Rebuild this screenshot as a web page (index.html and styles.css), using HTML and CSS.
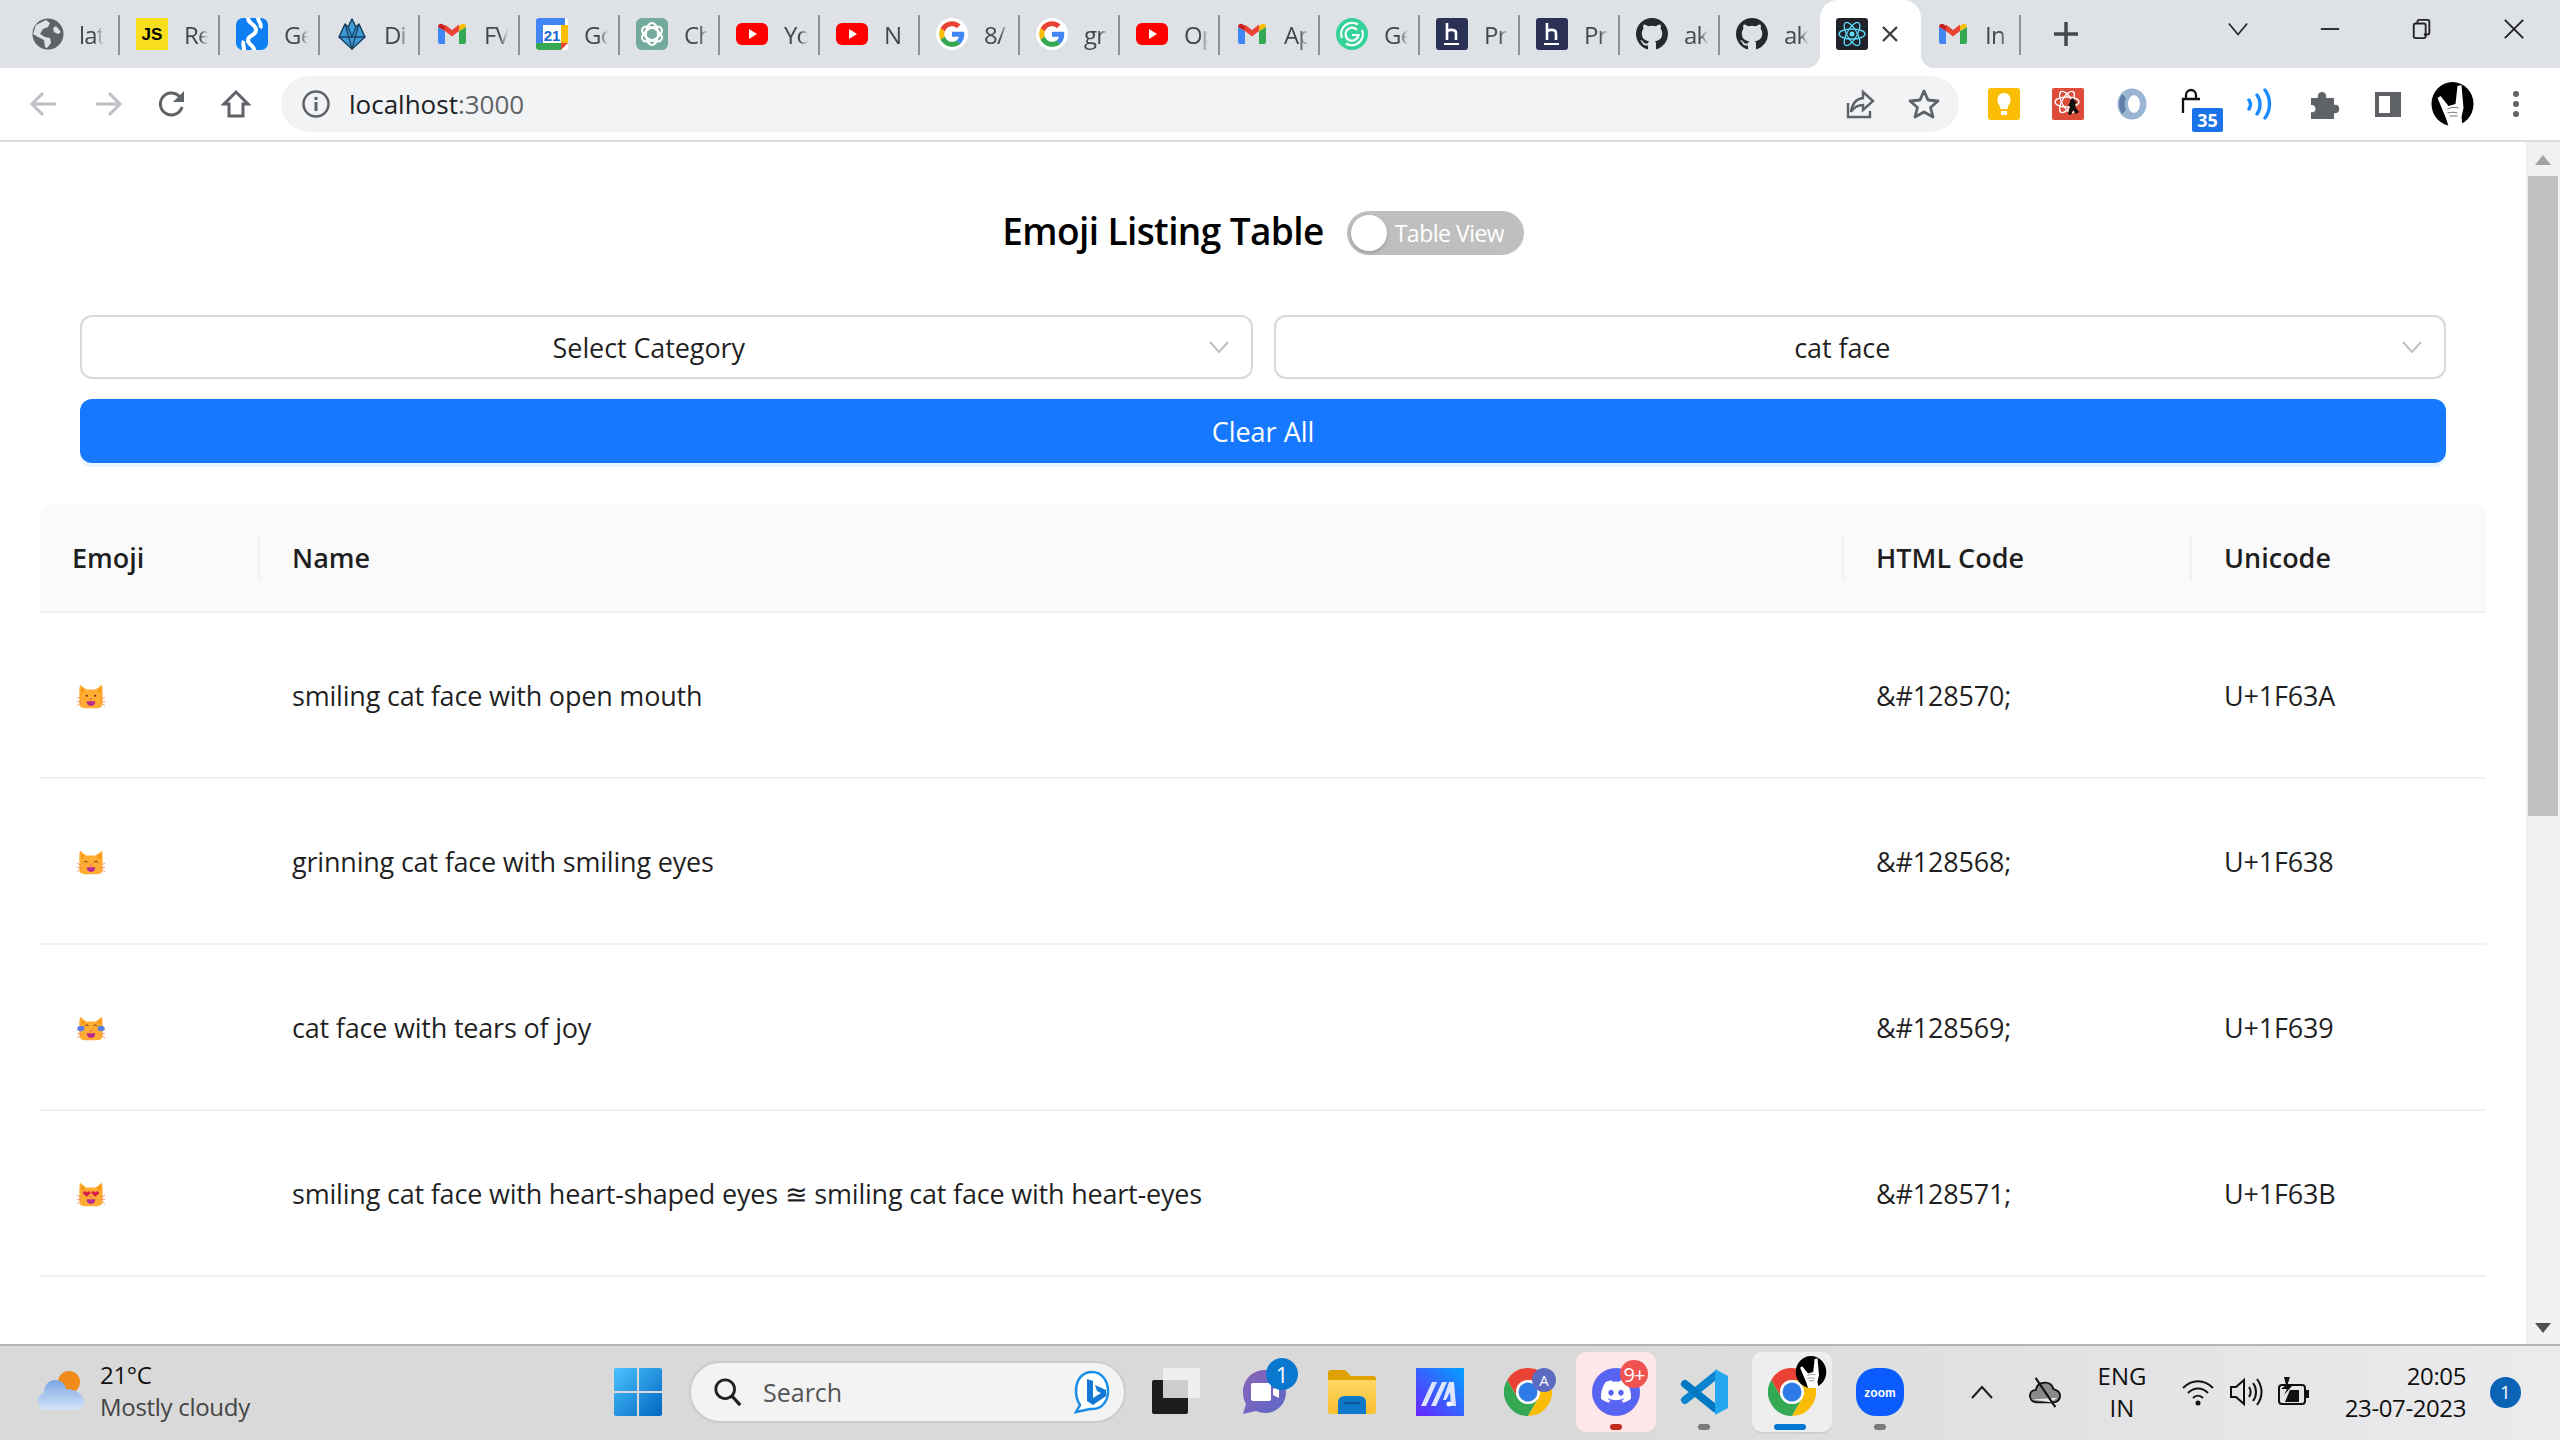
FILE: index.html
```html
<!DOCTYPE html>
<html lang="en">
<head>
<meta charset="utf-8">
<title>Emoji Listing Table</title>
<link rel="stylesheet" href="styles.css">
</head>
<body>
<svg class="defs" aria-hidden="true">
  <defs>
    <linearGradient id="winGrad" x1="0" y1="0" x2="1" y2="1"><stop offset="0" stop-color="#4cc2ff"/><stop offset="1" stop-color="#0067c0"/></linearGradient>
    <linearGradient id="mosaicGrad" x1="0" y1="1" x2="1" y2="0"><stop offset="0" stop-color="#6a24ff"/><stop offset="1" stop-color="#00a2ff"/></linearGradient>
    <linearGradient id="teamsGrad" x1="0" y1="0" x2="1" y2="1"><stop offset="0" stop-color="#8c64b8"/><stop offset="1" stop-color="#5a68c8"/></linearGradient>
    <linearGradient id="cloudGrad" x1="0" y1="0" x2="0" y2="1"><stop offset="0" stop-color="#7aa6e6"/><stop offset="1" stop-color="#d6e4f8"/></linearGradient>
    <linearGradient id="folderGrad" x1="0" y1="0" x2="0" y2="1"><stop offset="0" stop-color="#ffd766"/><stop offset="1" stop-color="#fbbf2d"/></linearGradient>
  </defs>
  <symbol id="gmail" viewBox="0 0 32 32">
    <path fill="#4285f4" d="M2 9v15a2 2 0 0 0 2 2h5V13z"/>
    <path fill="#34a853" d="M23 13v13h5a2 2 0 0 0 2-2V9z"/>
    <path fill="#ea4335" d="M9 13l7 5.5 7-5.5V6.5L16 12 9 6.5z"/>
    <path fill="#c5221f" d="M2 9c0-3 3-4 5-2.500l2 1.500v5z"/>
    <path fill="#fbbc04" d="M30 9c0-3-3-4-5-2.500L23 8v5z"/>
  </symbol>
  <symbol id="google" viewBox="-6 -6 60 60">
    <ellipse cx="24" cy="24" rx="30" ry="30" fill="#fff"/>
    <path fill="#EA4335" d="M24 9.5c3.54 0 6.71 1.22 9.21 3.6l6.85-6.85C35.9 2.38 30.47 0 24 0 14.62 0 6.51 5.38 2.56 13.22l7.98 6.19C12.43 13.72 17.74 9.5 24 9.5z"/>
    <path fill="#4285F4" d="M46.98 24.55c0-1.57-.15-3.09-.38-4.55H24v9.02h12.94c-.58 2.96-2.26 5.48-4.78 7.18l7.73 6c4.51-4.18 7.09-10.36 7.09-17.65z"/>
    <path fill="#FBBC05" d="M10.53 28.59c-.48-1.45-.76-2.99-.76-4.59s.27-3.14.76-4.59l-7.98-6.19C.92 16.46 0 20.12 0 24c0 3.88.92 7.54 2.56 10.78l7.97-6.19z"/>
    <path fill="#34A853" d="M24 48c6.48 0 11.93-2.13 16.04-5.81l-7.73-6c-2.15 1.45-4.92 2.3-8.31 2.3-6.26 0-11.57-4.22-13.47-9.91l-7.98 6.19C6.51 42.62 14.62 48 24 48z"/>
  </symbol>
  <symbol id="youtube" viewBox="0 0 32 32">
    <rect x="0" y="5" width="32" height="22" rx="6" fill="#f00"/>
    <path fill="#fff" d="M13 11l8 5-8 5z"/>
  </symbol>
  <symbol id="github" viewBox="0 0 16 16">
    <path fill="#24292f" d="M8 0C3.58 0 0 3.58 0 8c0 3.54 2.29 6.53 5.47 7.59.4.07.55-.17.55-.38 0-.19-.01-.82-.01-1.49-2.01.37-2.53-.49-2.69-.94-.09-.23-.48-.94-.82-1.13-.28-.15-.68-.52-.01-.53.63-.01 1.08.58 1.23.82.72 1.21 1.87.87 2.33.66.07-.52.28-.87.51-1.07-1.78-.2-3.64-.89-3.64-3.95 0-.87.31-1.59.82-2.15-.08-.2-.36-1.02.08-2.12 0 0 .67-.21 2.2.82.64-.18 1.32-.27 2-.27.68 0 1.36.09 2 .27 1.53-1.04 2.2-.82 2.2-.82.44 1.1.16 1.92.08 2.12.51.56.82 1.27.82 2.15 0 3.07-1.87 3.75-3.65 3.95.29.25.54.73.54 1.48 0 1.07-.01 1.93-.01 2.2 0 .21.15.46.55.38A8.013 8.013 0 0016 8c0-4.42-3.58-8-8-8z"/>
  </symbol>
  <symbol id="hash" viewBox="0 0 32 32">
    <rect width="32" height="32" rx="3" fill="#2a3154"/>
    <path fill="none" stroke="#fff" stroke-width="2.6" d="M11 5v17M11 14c1-3 9-3 9 1v7"/>
    <path stroke="#fff" stroke-width="2" d="M8 26h15"/>
  </symbol>
  <symbol id="chrome" viewBox="0 0 48 48">
    <path fill="#ea4335" d="M24 0A24 24 0 0 0 3.2 12L13.6 30A12 12 0 0 1 24 12H44.8A24 24 0 0 0 24 0z"/>
    <path fill="#34a853" d="M3.2 12A24 24 0 0 0 24 48L34.4 30A12 12 0 0 1 13.6 30z"/>
    <path fill="#fbbc04" d="M44.8 12H24A12 12 0 0 1 34.4 30L24 48A24 24 0 0 0 44.8 12z"/>
    <circle cx="24" cy="24" r="12" fill="#fff"/>
    <circle cx="24" cy="24" r="9.5" fill="#2f7be8"/>
  </symbol>
  <symbol id="rock" viewBox="0 0 42 44">
    <ellipse cx="21" cy="22" rx="21" ry="22" fill="#000"/>
    <path fill="#fff" d="M6 16l3-2 8 10 7-2 2-18 4-1 2 23-2 9 1 9H17l-3-9z"/>
    <path fill="none" stroke="#777" stroke-width="1" d="M16 27c3-2 8-2 11-1M16 31c3-1 7-1 10 0M18 34h8"/>
  </symbol>
  <symbol id="cat" viewBox="0 0 36 32">
    <path fill="#ffac33" d="M4 1l8 6h12l8-6c1 3 1 8 1 12v12c0 4-3 6-7 6H10c-4 0-7-2-7-6V13c0-4 0-9 1-12z"/>
    <path fill="#f4900c" d="M5.500 4l4 4-3.500 4zM30.500 4l-4 4 3.500 4z"/>
    <path fill="none" stroke="#f98a50" stroke-width="1" d="M0 17l6 2.500M0 28l6-4M0 22.500h6M36 17l-6 2.500M36 28l-6-4M36 22.500h-6"/>
    <path fill="#e6449a" d="M16.500 18.500h3L18 20.500z"/>
    <path fill="#bb2a90" d="M12.500 22h11c0 4-2 6-5.500 6s-5.500-2-5.500-6z"/>
  </symbol>
</svg>

<header class="tabstrip">
  <div class="tab tab-first"><svg class="fav" viewBox="0 0 32 32"><circle cx="16" cy="16" r="15.500" fill="#5f6368"/><path fill="#dee1e6" d="M14 2l4 3-2 4-5 2-3 5 5 3 5 1 1 5-4 5-2-1-1-7-6-3-5-3 3-9zM24 8l5 6-3 2-4-2-1-4z"/></svg><span class="tab-label">lat</span></div>
  <div class="tab"><svg class="fav" viewBox="0 0 32 32"><rect width="32" height="32" fill="#f7df1e"/><text x="16" y="22" text-anchor="middle" class="svgt-js">JS</text></svg><span class="tab-label">Re</span></div>
  <div class="tab"><svg class="fav" viewBox="0 0 32 32"><rect width="32" height="32" rx="7" fill="#0d7ff2"/><path fill="none" stroke="#fff" stroke-width="4" d="M12 0c0 6 8 6 8 12s-8 5-8 10 6 5 6 10M22 0c0 4 5 6 2 10M8 32c0-5-2-6 0-9"/></svg><span class="tab-label">Ge</span></div>
  <div class="tab"><svg class="fav" viewBox="0 0 32 32"><path fill="#3f9bd8" stroke="#17415f" stroke-width="1.500" stroke-linejoin="round" d="M16 1l4 8 3-3 6 13-13 12L3 19 9 6l3 3z"/><path fill="none" stroke="#17415f" stroke-width="1.300" d="M3 19h26M9 6l7 25 7-25M12 9l4 10 4-10"/></svg><span class="tab-label">Di</span></div>
  <div class="tab"><svg class="fav"><use href="#gmail"/></svg><span class="tab-label">FV</span></div>
  <div class="tab"><svg class="fav" viewBox="0 0 32 32"><rect width="32" height="32" rx="3" fill="#fff"/><path fill="#4285f4" d="M3 0h26v7H0V3a3 3 0 0 1 3-3z"/><path fill="#4285f4" d="M0 7h7v18H0z"/><path fill="#fbbc04" d="M25 7h7v18h-7z"/><path fill="#34a853" d="M0 25h25v7H3a3 3 0 0 1-3-3z"/><path fill="#ea4335" d="M25 25h7l-7 7z"/><text x="16" y="23" text-anchor="middle" class="svgt-cal">21</text></svg><span class="tab-label">Go</span></div>
  <div class="tab"><svg class="fav" viewBox="0 0 32 32"><rect width="32" height="32" rx="6" fill="#74aa9c"/><g fill="none" stroke="#fff" stroke-width="2"><ellipse cx="16" cy="16" rx="6" ry="11"/><ellipse cx="16" cy="16" rx="6" ry="11" transform="rotate(60 16 16)"/><ellipse cx="16" cy="16" rx="6" ry="11" transform="rotate(120 16 16)"/></g></svg><span class="tab-label">Ch</span></div>
  <div class="tab"><svg class="fav"><use href="#youtube"/></svg><span class="tab-label">Yo</span></div>
  <div class="tab"><svg class="fav"><use href="#youtube"/></svg><span class="tab-label">N</span></div>
  <div class="tab"><svg class="fav"><use href="#google"/></svg><span class="tab-label">8/</span></div>
  <div class="tab"><svg class="fav"><use href="#google"/></svg><span class="tab-label">gr</span></div>
  <div class="tab"><svg class="fav"><use href="#youtube"/></svg><span class="tab-label">Op</span></div>
  <div class="tab"><svg class="fav"><use href="#gmail"/></svg><span class="tab-label">Ap</span></div>
  <div class="tab"><svg class="fav" viewBox="0 0 32 32"><circle cx="16" cy="16" r="16" fill="#35d39a"/><g fill="none" stroke="#fff" stroke-width="2.200"><path d="M6 20A11 11 0 0 1 22 6.500M26 12A11 11 0 0 1 10 25.500"/><path d="M21 12a6.500 6.500 0 1 0 1.500 5H16"/></g></svg><span class="tab-label">Ge</span></div>
  <div class="tab"><svg class="fav"><use href="#hash"/></svg><span class="tab-label">Pr</span></div>
  <div class="tab"><svg class="fav"><use href="#hash"/></svg><span class="tab-label">Pr</span></div>
  <div class="tab"><svg class="fav"><use href="#github"/></svg><span class="tab-label">ak</span></div>
  <div class="tab tab-before"><svg class="fav"><use href="#github"/></svg><span class="tab-label">ak</span></div>
  <div class="tab tab-active">
    <svg class="fav" viewBox="0 0 32 32"><rect width="32" height="32" rx="3" fill="#20232a"/><g fill="none" stroke="#61dafb" stroke-width="1.300"><ellipse cx="16" cy="16" rx="13" ry="5"/><ellipse cx="16" cy="16" rx="13" ry="5" transform="rotate(60 16 16)"/><ellipse cx="16" cy="16" rx="13" ry="5" transform="rotate(120 16 16)"/></g><circle cx="16" cy="16" r="2.500" fill="#61dafb"/></svg>
    <svg class="tab-close" viewBox="0 0 18 18"><path stroke="#3c4043" stroke-width="2.400" d="M2 2l14 14M16 2L2 16"/></svg>
  </div>
  <div class="tab"><svg class="fav"><use href="#gmail"/></svg><span class="tab-label">In</span></div>
  <button class="newtab" type="button"><svg viewBox="0 0 24 24"><path stroke="#45484c" stroke-width="3.500" d="M12 0v24M0 12h24"/></svg></button>
  <div class="winctl">
    <span class="winbtn"><svg viewBox="0 0 24 16"><path fill="none" stroke="#222" stroke-width="1.800" d="M2 2l10 12L22 2"/></svg></span>
    <span class="winbtn"><svg viewBox="0 0 24 16"><path stroke="#222" stroke-width="2" d="M2 8h20"/></svg></span>
    <span class="winbtn"><svg viewBox="0 0 24 24"><path fill="none" stroke="#222" stroke-width="2" d="M3 8a2 2 0 0 1 2-2h9a2 2 0 0 1 2 2v12a2 2 0 0 1-2 2H5a2 2 0 0 1-2-2zM7 6V4a2 2 0 0 1 2-2h9a2 2 0 0 1 2 2v12a2 2 0 0 1-2 2h-4"/></svg></span>
    <span class="winbtn"><svg viewBox="0 0 24 24"><path stroke="#222" stroke-width="2" d="M2 2l20 20M22 2L2 22"/></svg></span>
  </div>
</header>

<nav class="toolbar">
  <span class="tb"><svg class="ic" viewBox="0 0 32 32"><path fill="none" stroke="#bdc1c6" stroke-width="3" d="M28 16H5M15 5L4 16l11 11"/></svg></span>
  <span class="tb"><svg class="ic" viewBox="0 0 32 32"><path fill="none" stroke="#bdc1c6" stroke-width="3" d="M4 16h23M17 5l11 11-11 11"/></svg></span>
  <span class="tb"><svg class="ic" viewBox="0 0 32 32"><path fill="none" stroke="#5f6368" stroke-width="3" d="M26 19a11 11 0 1 1-3-11l4 4"/><path fill="#5f6368" d="M28 3v11H17z"/></svg></span>
  <span class="tb"><svg class="ic" viewBox="0 0 32 32"><path fill="none" stroke="#5f6368" stroke-width="3" d="M16 4L4 16h5v12h14V16h5z"/></svg></span>
  <div class="omnibox">
    <svg class="ic info" viewBox="0 0 32 32"><circle cx="16" cy="16" r="12.500" fill="none" stroke="#5f6368" stroke-width="2.500"/><path stroke="#5f6368" stroke-width="3" d="M16 14v9M16 9v3"/></svg>
    <span class="url">localhost<span class="url-dim">:3000</span></span>
    <span class="tb tb-share"><svg class="ic" viewBox="0 0 32 32"><path fill="none" stroke="#5f6368" stroke-width="2.400" d="M4 15v14h22v-6M19 4l10 9-10 9v-5c-6 0-9 2-12 7 1-8 5-13 12-14z"/></svg></span>
    <span class="tb"><svg class="ic" viewBox="0 0 32 32"><path fill="none" stroke="#5f6368" stroke-width="2.800" stroke-linejoin="round" d="M16 3l4 9 10 1-7.500 6.500L25 29l-9-5-9 5 2.500-9.500L2 13l10-1z"/></svg></span>
  </div>
  <span class="tb"><svg class="ic" viewBox="0 0 32 32"><rect width="32" height="32" rx="3" fill="#fbbc04"/><path fill="#fff" d="M16 5c5 0 7 4 6.500 8-.4 3-2.500 4-3 8h-7c-.5-4-2.600-5-3-8C9 9 11 5 16 5zM13 23h6v4h-6z"/></svg></span>
  <span class="tb"><svg class="ic" viewBox="0 0 32 32"><rect width="32" height="32" rx="2" fill="#dd4b39"/><g fill="none" stroke="#fff" stroke-width="1.300"><ellipse cx="15" cy="14" rx="12" ry="5"/><ellipse cx="15" cy="14" rx="12" ry="5" transform="rotate(60 15 14)"/><ellipse cx="15" cy="14" rx="12" ry="5" transform="rotate(120 15 14)"/></g><path fill="#111" d="M18 12l3-2 2 3 2 1-2 2 1 4 3 4-3 2-3-4-2 5-3-1 2-7-2-2 2-2z"/></svg></span>
  <span class="tb"><svg class="ic" viewBox="0 0 32 32"><ellipse cx="16" cy="16" rx="14.500" ry="15.500" fill="#9ab5d3"/><ellipse cx="18" cy="16" rx="6" ry="9" fill="#fff"/><path fill="#5f7fa6" d="M6 6c-4 6-4 14 0 20l4-4c-2-4-2-8 0-12z"/></svg></span>
  <span class="tb tb-badge"><svg class="ic lock" viewBox="0 0 32 32"><path fill="none" stroke="#111" stroke-width="2.300" d="M7 27V13h17M10 13V9a5 5 0 0 1 10 0v4"/></svg><span class="ext-badge">35</span></span>
  <span class="tb"><svg class="ic" viewBox="0 0 32 32"><path fill="none" stroke="#1a8cff" stroke-width="3.400" stroke-linecap="round" d="M5 12c2 3 2 6 0 9M13 7c4 5 4 14 0 19M21 2c6 8 6 20 0 28"/></svg></span>
  <span class="tb"><svg class="ic" viewBox="0 0 32 32"><path fill="#5f6368" d="M3 10h7c-2-8 10-8 8 0h8v7c7-2 7 10 0 8v6H3v-7c6 2 6-8 0-7z"/></svg></span>
  <span class="tb"><svg class="ic" viewBox="0 0 32 32"><path fill="#5f6368" d="M3 4h26v25H3zM7 8v17h11V8z"/></svg></span>
  <span class="tb"><svg class="avatar"><use href="#rock"/></svg></span>
  <span class="tb"><svg class="ic" viewBox="0 0 32 32"><g fill="#5f6368"><circle cx="16" cy="6" r="3"/><circle cx="16" cy="16" r="3"/><circle cx="16" cy="26" r="3"/></g></svg></span>
</nav>

<div class="viewport">
  <main class="page">
    <div class="heading">
      <h1 class="title">Emoji Listing Table</h1>
      <div class="toggle"><span class="knob"></span><span class="toggle-text">Table View</span></div>
    </div>
    <div class="filters">
      <div class="select"><span class="select-text">Select Category</span><svg class="chev" viewBox="0 0 20 12"><path fill="none" stroke="#bfbfbf" stroke-width="2" d="M1 1l9 10 9-10"/></svg></div>
      <div class="select"><span class="select-text">cat face</span><svg class="chev" viewBox="0 0 20 12"><path fill="none" stroke="#bfbfbf" stroke-width="2" d="M1 1l9 10 9-10"/></svg></div>
    </div>
    <button class="clear" type="button">Clear All</button>
    <table class="emoji-table">
      <colgroup><col class="c-emoji"><col class="c-name"><col class="c-html"><col class="c-uni"></colgroup>
      <thead>
        <tr><th class="sep">Emoji</th><th class="sep">Name</th><th class="sep">HTML Code</th><th>Unicode</th></tr>
      </thead>
      <tbody>
        <tr>
          <td><svg class="cat-ic" viewBox="0 0 36 32"><use href="#cat"/><circle cx="12.500" cy="15" r="1.300" fill="#662113"/><circle cx="23.500" cy="15" r="1.300" fill="#662113"/></svg></td>
          <td>smiling cat face with open mouth</td><td>&amp;#128570;</td><td>U+1F63A</td>
        </tr>
        <tr>
          <td><svg class="cat-ic" viewBox="0 0 36 32"><use href="#cat"/><path fill="none" stroke="#662113" stroke-width="1.200" d="M9 16c1-2 4-2 5 0M22 16c1-2 4-2 5 0"/></svg></td>
          <td>grinning cat face with smiling eyes</td><td>&amp;#128568;</td><td>U+1F638</td>
        </tr>
        <tr>
          <td><svg class="cat-ic" viewBox="0 0 36 32"><use href="#cat"/><path fill="none" stroke="#662113" stroke-width="1.200" d="M10 13c1-2 4-2 5 0M21 13c1-2 4-2 5 0"/><ellipse cx="5" cy="16" rx="4.500" ry="3.500" fill="#5b7fe8"/><ellipse cx="31" cy="16" rx="4.500" ry="3.500" fill="#5b7fe8"/></svg></td>
          <td>cat face with tears of joy</td><td>&amp;#128569;</td><td>U+1F639</td>
        </tr>
        <tr>
          <td><svg class="cat-ic" viewBox="0 0 36 32"><use href="#cat"/><path fill="#d8204f" d="M12.500 19l-4.500-4c-2-3 2.500-4.500 4.500-2 2-2.500 6.500-1 4.500 2zM23.500 19l-4.500-4c-2-3 2.500-4.500 4.500-2 2-2.500 6.500-1 4.500 2z"/></svg></td>
          <td>smiling cat face with heart-shaped eyes ≊ smiling cat face with heart-eyes</td><td>&amp;#128571;</td><td>U+1F63B</td>
        </tr>
      </tbody>
    </table>
  </main>
  <aside class="scrollbar">
    <svg class="sb-arrow" viewBox="0 0 16 10"><path fill="#a3a3a3" d="M8 0l8 10H0z"/></svg>
    <div class="sb-thumb"></div>
    <div class="sb-track"></div>
    <svg class="sb-arrow" viewBox="0 0 16 10"><path fill="#505050" d="M8 10L0 0h16z"/></svg>
  </aside>
</div>

<footer class="taskbar">
  <div class="weather">
    <svg class="weather-ic" viewBox="0 0 46 42"><circle cx="31" cy="12" r="11" fill="#f08a18"/><path fill="url(#cloudGrad)" d="M8 40C2 40 0 35 0 31c0-4 2-7 6-8 0-8 5-13 11-13s10 3 11 9c5 0 9 1 13 4 3 2 5 5 5 8 0 5-3 9-8 9z"/></svg>
    <div class="weather-text"><div class="w-temp">21°C</div><div class="w-desc">Mostly cloudy</div></div>
  </div>
  <div class="slot"><svg class="tk-ic" viewBox="0 0 46 46"><g fill="url(#winGrad)"><path d="M0 2a2 2 0 0 1 2-2h20v22H0zM24 0h20a2 2 0 0 1 2 2v20H24zM0 24h22v22H2a2 2 0 0 1-2-2zM24 24h22v20a2 2 0 0 1-2 2H24z"/></g></svg></div>
  <div class="search">
    <svg class="search-ic" viewBox="0 0 32 32"><circle cx="13" cy="13" r="10" fill="none" stroke="#222" stroke-width="3"/><path stroke="#222" stroke-width="3.500" d="M20 20l9 10"/></svg>
    <span class="search-text">Search</span>
    <svg class="bing" viewBox="0 0 36 44"><path fill="#fff" stroke="#1b8fe6" stroke-width="2.500" d="M18 2C8 2 2 10 2 21c0 6 2 11 4 14l-4 7 14-3h3c9 0 15-8 15-18S28 2 18 2z"/><path fill="#1478d4" d="M13 9l6 2v17l8-5-4-2-2-6 11 5v6l-13 9-6-4z"/></svg>
  </div>
  <div class="slot"><svg class="tk-ic" viewBox="0 0 48 48"><rect x="0" y="12" width="36" height="34" rx="2" fill="#1c1c1c"/><rect x="11" y="0" width="37" height="30" rx="1" fill="#f4f4f4" fill-opacity=".82"/></svg></div>
  <div class="slot"><svg class="tk-ic" viewBox="0 0 48 48"><path fill="url(#teamsGrad)" d="M25 2C12 2 3 12 3 24c0 5 1 9 3 12l-3 10 13-3c3 1 6 2 9 2 12 0 21-9 21-21S37 2 25 2z"/><rect x="11" y="15" width="20" height="18" rx="2" fill="#fff"/><path fill="#fff" d="M33 21l6-3v12l-6-3z"/></svg><span class="tk-badge badge-blue">1</span></div>
  <div class="slot"><svg class="tk-ic" viewBox="0 0 48 44"><path fill="#dfa100" d="M0 3a3 3 0 0 1 3-3h14l6 6h22a3 3 0 0 1 3 3v6H0z"/><path fill="url(#folderGrad)" d="M0 10h48v31a3 3 0 0 1-3 3H3a3 3 0 0 1-3-3z"/><path fill="#0f78c8" d="M10 44V32a6 6 0 0 1 6-6h16a6 6 0 0 1 6 6v12z"/><path stroke="#0a5a9a" stroke-width="2" d="M16 33h16"/></svg></div>
  <div class="slot"><svg class="tk-ic" viewBox="0 0 48 48"><rect width="48" height="48" fill="url(#mosaicGrad)"/><path fill="#dfe4ff" d="M5 38L16 14h5L10 38zM15 38l11-24h5L20 38zM33 14h5l2 24h-5l-1-14-4 8h-3z"/><circle cx="33" cy="36" r="2.500" fill="#fff"/></svg></div>
  <div class="slot"><svg class="tk-ic"><use href="#chrome"/></svg><span class="tk-badge badge-acc">A</span></div>
  <div class="slot slot-alert"><svg class="tk-ic" viewBox="0 0 48 48"><circle cx="24" cy="24" r="24" fill="#5865f2"/><svg x="9" y="12" width="30" height="23" viewBox="0 0 127.140 96.360"><path fill="#fff" d="M107.700 8.070A105.150 105.150 0 0 0 81.470 0a72.060 72.060 0 0 0-3.360 6.830 97.680 97.680 0 0 0-29.110 0A72.370 72.370 0 0 0 45.640 0a105.890 105.890 0 0 0-26.250 8.090C2.790 32.650-1.710 56.600.54 80.210a105.730 105.730 0 0 0 32.170 16.150 77.700 77.700 0 0 0 6.890-11.110 68.420 68.420 0 0 1-10.850-5.180c.91-.66 1.800-1.340 2.660-2a75.570 75.570 0 0 0 64.320 0c.87.710 1.760 1.390 2.660 2a68.680 68.680 0 0 1-10.870 5.190 77 77 0 0 0 6.890 11.100 105.250 105.250 0 0 0 32.190-16.140c2.640-27.380-4.510-51.110-18.900-72.150zM42.450 65.690C36.180 65.690 31 60 31 53s5-12.740 11.430-12.740S54 46 53.890 53s-5.050 12.690-11.440 12.690zm42.240 0C78.410 65.690 73.250 60 73.250 53s5-12.740 11.440-12.740S96.230 46 96.120 53s-5.040 12.690-11.430 12.690z"/></svg></svg><span class="tk-badge badge-red">9+</span><span class="pill pill-red"></span></div>
  <div class="slot"><svg class="tk-ic" viewBox="0 0 48 48"><g fill="none" stroke-width="8" stroke-linecap="round"><path stroke="#0a84d0" d="M36 7L5 32"/><path stroke="#0078c4" d="M5 16l31 25"/></g><path fill="#22a7f0" d="M35 1l13 7v32l-13 7z"/></svg><span class="pill pill-gray"></span></div>
  <div class="slot slot-active"><svg class="tk-ic"><use href="#chrome"/></svg><svg class="tk-avatar"><use href="#rock"/></svg><span class="pill pill-blue"></span></div>
  <div class="slot"><svg class="tk-ic" viewBox="0 0 48 48"><rect width="48" height="48" rx="20" fill="#0b5cff"/><text x="24" y="29" text-anchor="middle" class="svgt-zoom">zoom</text></svg><span class="pill pill-gray"></span></div>
  <div class="tray">
    <span class="tr tr-caret"><svg class="tr-ic" viewBox="0 0 24 24"><path fill="none" stroke="#1a1a1a" stroke-width="2" d="M2 18L12 7l10 11"/></svg></span>
    <span class="tr tr-cloud"><svg class="tr-ic2" viewBox="0 0 34 34"><path fill="#8a8a8a" d="M9 28C3 28 1 24 1 21s2-6 6-6c1-5 5-8 10-8s8 3 9 7c4 1 7 3 7 7s-3 7-7 7z" stroke="#111" stroke-width="2"/><path fill="#e8e8e8" d="M3 25l20 3 7-5z"/><path stroke="#111" stroke-width="2.200" d="M7 2l21 31"/></svg></span>
    <span class="tr tr-lang"><span>ENG</span><span>IN</span></span>
    <span class="tr tr-sys tr-wifi"><svg class="tr-ic2" viewBox="0 0 34 30"><g fill="none" stroke="#111" stroke-width="2"><path d="M2 11c9-9 21-9 30 0M7 16c6-6 14-6 20 0M12 21c3-3 7-3 10 0"/></g><circle cx="17" cy="26" r="2.500" fill="#111"/></svg></span>
    <span class="tr tr-sys"><svg class="tr-ic2" viewBox="0 0 34 30"><path fill="none" stroke="#111" stroke-width="2" d="M2 10h5l8-7v24l-8-7H2zM20 10c2 3 2 7 0 10M24 6c4 5 4 13 0 18M28 2c6 8 6 18 0 26"/></svg></span>
    <span class="tr tr-sys"><svg class="tr-ic2" viewBox="0 0 34 30"><rect x="2" y="8" width="26" height="19" rx="3" fill="none" stroke="#111" stroke-width="2"/><path fill="#111" d="M29 13h3v8h-3zM8 25l5-12h9v12z"/><path fill="#111" d="M7 0l2 8-5 4 6 0-3 6 8-9-5 0 3-9z"/></svg></span>
    <div class="clock"><span>20:05</span><span>23-07-2023</span></div>
    <span class="notif">1</span>
  </div>
</footer>
</body>
</html>
```

FILE: styles.css
```css
* { box-sizing: border-box; }
html, body { margin: 0; padding: 0; }
body {
  width: 2560px;
  height: 1440px;
  overflow: hidden;
  display: flex;
  flex-direction: column;
  background: #fff;
  font-family: "Open Sans", "Noto Sans", sans-serif;
  color: #000;
}
.defs { width: 0; height: 0; position: absolute; }

.svgt-js { font: 700 17px "Liberation Sans", sans-serif; fill: #000; }
.svgt-cal { font: 700 15px "Liberation Sans", sans-serif; fill: #1a66d6; }
.svgt-zoom { font: 700 12px "Liberation Sans", sans-serif; fill: #fff; }

/* Tab strip */
.tabstrip {
  height: 68px;
  flex: none;
  display: flex;
  align-items: stretch;
  padding-left: 20px;
  background: #dee1e6;
}
.tab {
  position: relative;
  width: 100px;
  flex: none;
  display: flex;
  align-items: center;
  padding-left: 16px;
  gap: 16px;
}
.tab-first { padding-left: 12px; gap: 15px; }
.tab::after {
  content: "";
  position: absolute;
  right: 0;
  top: 15px;
  width: 2px;
  height: 40px;
  background: #8d9094;
}
.tab-before::after { display: none; }
.tab-active {
  background: #fff;
  border-radius: 18px 18px 0 0;
  width: 101px;
}
.tab-active::before {
  content: "";
  position: absolute;
  left: -14px;
  bottom: 0;
  width: 14px;
  height: 14px;
  background: radial-gradient(circle at 0 0, transparent 14px, #fff 14.500px);
}
.tab-active::after {
  top: auto;
  right: -14px;
  bottom: 0;
  width: 14px;
  height: 14px;
  background: radial-gradient(circle at 100% 0, transparent 14px, #fff 14.500px);
}
.fav { width: 32px; height: 32px; flex: none; }
.tab-label {
  width: 24px;
  overflow: hidden;
  white-space: nowrap;
  font-size: 24px;
  letter-spacing: -.8px;
  color: #45484c;
  -webkit-mask-image: linear-gradient(90deg, #000 65%, transparent);
  mask-image: linear-gradient(90deg, #000 65%, transparent);
}
.tab-close { width: 18px; height: 18px; flex: none; margin-left: -3px; }
.newtab {
  width: 24px;
  margin-left: 33px;
  padding: 0;
  border: 0;
  background: none;
  display: flex;
  align-items: center;
}
.newtab svg { width: 24px; height: 24px; }
.winctl { margin-left: auto; display: flex; height: 58px; }
.winbtn { width: 92px; display: flex; align-items: center; justify-content: center; }
.winbtn svg { width: 22px; height: 22px; }

/* Toolbar */
.toolbar {
  height: 74px;
  flex: none;
  display: flex;
  align-items: flex-start;
  padding: 8px 12px 0;
  background: #fff;
  border-bottom: 2px solid #dadce0;
}
.tb {
  position: relative;
  width: 64px;
  height: 56px;
  flex: none;
  display: flex;
  align-items: center;
  justify-content: center;
}
.ic { width: 32px; height: 32px; }
.lock { margin-left: -8px; margin-top: -4px; }
.omnibox {
  flex: 1;
  height: 56px;
  margin: 0 13px;
  padding: 0 3px 0 19px;
  display: flex;
  align-items: center;
  border-radius: 28px;
  background: #f1f3f4;
}
.info { flex: none; margin-right: 17px; }
.url { flex: 1; font-size: 26px; color: #202124; }
.url-dim { color: #5f6368; }
.ext-badge {
  position: absolute;
  left: 28px;
  bottom: 0;
  width: 31px;
  height: 24px;
  border-radius: 2px;
  background: #1a73e8;
  color: #fff;
  font-size: 18px;
  font-weight: 700;
  line-height: 24px;
  text-align: center;
}
.avatar { width: 43px; height: 44px; }

/* Content */
.viewport { flex: 1; min-height: 0; display: flex; }
.page { flex: 1; min-width: 0; overflow: hidden; padding-top: 59px; }
.heading { display: flex; align-items: center; justify-content: center; height: 64px; gap: 23px; }
.title { margin: 0 0 6px; font-size: 37px; font-weight: 600; letter-spacing: -.6px; color: #000; }
.toggle {
  position: relative;
  width: 177px;
  height: 44px;
  display: flex;
  align-items: center;
  padding-left: 48px;
  border-radius: 22px;
  background: #bfbfbf;
}
.knob {
  position: absolute;
  left: 4px;
  top: 4px;
  width: 36px;
  height: 36px;
  border-radius: 50%;
  background: #fff;
  box-shadow: 0 2px 4px rgba(0, 35, 11, .2);
}
.toggle-text { font-size: 23px; color: #fff; white-space: nowrap; letter-spacing: -.5px; }

.filters {
  display: grid;
  grid-template-columns: 1fr 1fr;
  gap: 21px;
  margin: 50px 80px 0;
}
.select {
  height: 64px;
  display: flex;
  align-items: center;
  padding: 0 22px;
  border: 2px solid #d9d9d9;
  border-radius: 12px;
  background: #fff;
}
.select-text { flex: 1; text-align: center; font-size: 27px; letter-spacing: -.1px; color: rgba(0, 0, 0, .88); padding-right: 15px; }
.chev { width: 20px; height: 12px; flex: none; }
.clear {
  display: block;
  width: 2366px;
  height: 64px;
  margin: 20px 80px 0;
  border: 0;
  border-radius: 12px;
  background: #1677ff;
  color: #fff;
  font-family: inherit;
  font-size: 27px;
  box-shadow: 0 4px 0 rgba(5, 145, 255, .1);
}

.emoji-table {
  width: 2446px;
  margin: 40px 40px 0;
  border-collapse: separate;
  border-spacing: 0;
  table-layout: fixed;
  font-size: 27px;
  color: rgba(0, 0, 0, .88);
}
.c-emoji { width: 220px; }
.c-name { width: 1584px; }
.c-html { width: 348px; }
.c-uni { width: 294px; }
th, td { padding: 0 32px; text-align: left; }
th {
  position: relative;
  height: 110px;
  background: #fafafa;
  border-bottom: 2px solid #f0f0f0;
  font-weight: 600;
}
th:first-child { border-top-left-radius: 16px; }
th:last-child { border-top-right-radius: 16px; }
.sep::after {
  content: "";
  position: absolute;
  right: 0;
  top: 32px;
  width: 2px;
  height: 44px;
  background: #f0f0f0;
}
td { height: 166px; border-bottom: 2px solid #f0f0f0; letter-spacing: -.2px; }
.cat-ic { display: block; width: 28px; height: 25px; margin: 2px 0 0 5px; }

.scrollbar { width: 34px; flex: none; display: flex; flex-direction: column; align-items: center; background: #f1f1f1; }
.sb-arrow { width: 16px; height: 10px; flex: none; margin: 13px 0 11px; }
.sb-thumb { width: 30px; height: 640px; flex: none; background: #c1c1c1; }
.sb-track { flex: 1; }

/* Taskbar */
.taskbar {
  height: 96px;
  flex: none;
  display: flex;
  align-items: flex-start;
  padding-top: 6px;
  border-top: 2px solid #b4b4b4;
  background: linear-gradient(90deg, #d9d9d9 0, #d9d9d9 60%, #ebebee 100%);
}
.weather { width: 594px; flex: none; display: flex; align-items: center; height: 78px; padding-left: 38px; gap: 16px; }
.weather-ic { width: 46px; height: 42px; flex: none; }
.weather-text { font-size: 24px; line-height: 32px; letter-spacing: -.3px; }
.w-temp { color: #111; }
.w-desc { color: #444; }
.slot {
  position: relative;
  width: 80px;
  height: 80px;
  margin: 0 4px;
  flex: none;
  display: flex;
  align-items: center;
  justify-content: center;
  border-radius: 10px;
}
.slot-alert { background: #fde7e9; }
.slot-active { background: #eeeeee; box-shadow: 0 2px 0 #cfcfcf; }
.tk-ic { width: 48px; height: 48px; flex: none; }
.tk-badge {
  position: absolute;
  display: flex;
  align-items: center;
  justify-content: center;
  border-radius: 50%;
  color: #fff;
}
.badge-blue { left: 42px; top: 6px; width: 32px; height: 32px; background: #0b78d0; font-size: 22px; }
.badge-acc { left: 44px; top: 16px; width: 24px; height: 24px; background: #5c6bc0; font-size: 15px; }
.badge-red { left: 44px; top: 8px; width: 28px; height: 28px; background: #ef5350; font-size: 20px; letter-spacing: -1px; }
.tk-avatar { position: absolute; left: 43px; top: 4px; width: 32px; height: 32px; }
.pill { position: absolute; bottom: 2px; height: 6px; border-radius: 3px; }
.pill-red { left: 34px; width: 12px; background: #c42b1c; }
.pill-gray { left: 34px; width: 12px; background: #7a7a7a; }
.pill-blue { left: 22px; width: 32px; background: #0078d4; }
.search {
  width: 437px;
  height: 62px;
  margin: 9px 6px 0 7px;
  flex: none;
  display: flex;
  align-items: center;
  padding: 0 14px 0 22px;
  border: 2px solid #cbcbcb;
  border-radius: 31px;
  background: #f3f3f3;
}
.search-ic { width: 30px; height: 32px; flex: none; }
.search-text { flex: 1; margin-left: 20px; font-size: 25px; color: #555; }
.bing { width: 36px; height: 44px; flex: none; }

.tray { flex: 1; display: flex; align-items: center; height: 80px; padding-left: 26px; }
.tr { display: flex; align-items: center; justify-content: center; flex: none; }
.tr-caret { width: 64px; }
.tr-cloud { width: 62px; }
.tr-lang { width: 92px; flex-direction: column; font-size: 24px; line-height: 32px; color: #111; }
.tr-sys { width: 48px; }
.tr-wifi { margin-left: 6px; }
.tr-ic { width: 24px; height: 24px; }
.tr-ic2 { width: 34px; height: 32px; }
.clock {
  width: 148px;
  flex: none;
  display: flex;
  flex-direction: column;
  align-items: flex-end;
  font-size: 24px;
  line-height: 32px;
  letter-spacing: -.4px;
  color: #111;
}
.notif {
  width: 31px;
  height: 31px;
  margin-left: 24px;
  flex: none;
  display: flex;
  align-items: center;
  justify-content: center;
  border-radius: 50%;
  background: #0b63b6;
  color: #fff;
  font-size: 18px;
}
```
